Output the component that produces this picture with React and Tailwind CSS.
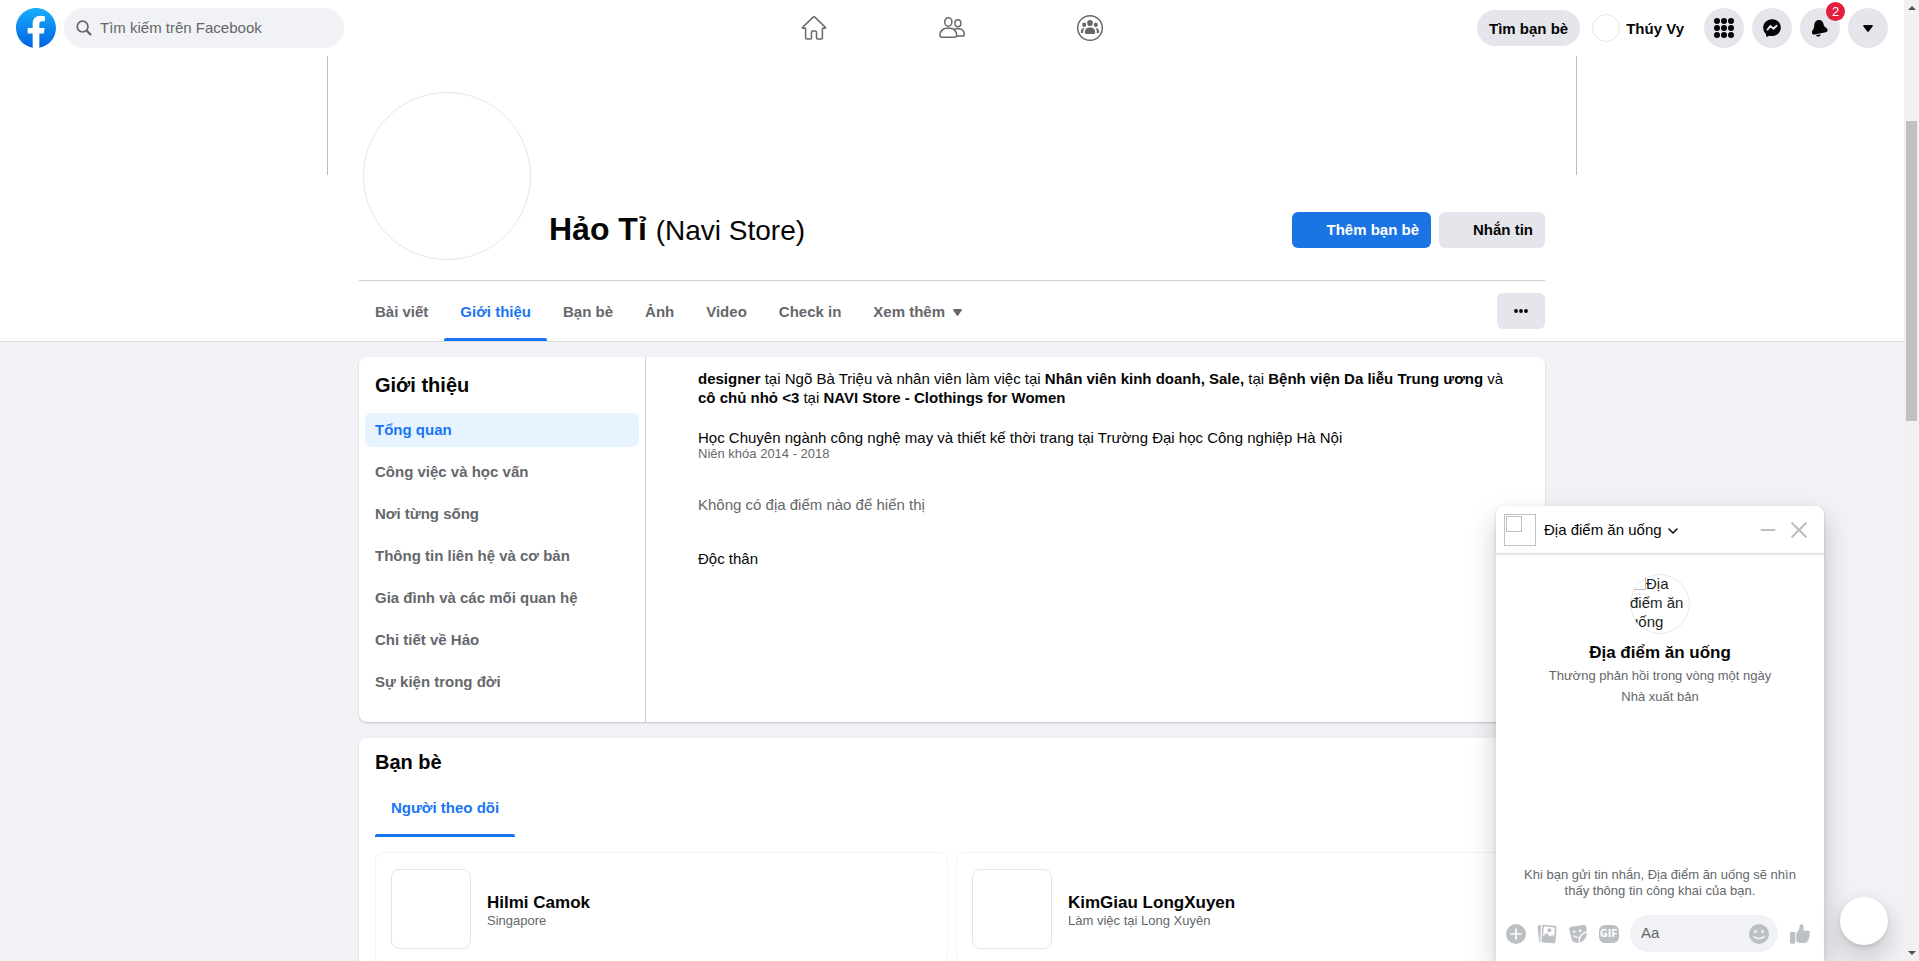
import React from "react";

const tabs = ["Bài viết", "Giới thiệu", "Bạn bè", "Ảnh", "Video", "Check in"];

const sections = [
  "Tổng quan",
  "Công việc và học vấn",
  "Nơi từng sống",
  "Thông tin liên hệ và cơ bản",
  "Gia đình và các mối quan hệ",
  "Chi tiết về Hảo",
  "Sự kiện trong đời",
];

const followers = [
  { name: "Hilmi Camok", note: "Singapore" },
  { name: "KimGiau LongXuyen", note: "Làm việc tại Long Xuyên" },
];

function Logo() {
  return (
    <svg viewBox="0 0 36 36" className="size-10" aria-hidden="true">
      <defs>
        <linearGradient id="logo-fill" x1="0" y1="0" x2="0" y2="1">
          <stop offset="0" stopColor="#19AFFF" />
          <stop offset="1" stopColor="#0062E0" />
        </linearGradient>
      </defs>
      <path fill="url(#logo-fill)" d="M15 35.8C6.5 34.3 0 26.9 0 18 0 8.1 8.1 0 18 0s18 8.1 18 18c0 8.9-6.5 16.3-15 17.8l-1-.8h-4l-1 .8z" />
      <path fill="#fff" d="M25 23l.8-5H21v-3.5c0-1.4.5-2.5 2.7-2.5H26V7.4c-1.3-.2-2.7-.4-4-.4-4.1 0-7 2.5-7 7v4h-4.5v5H15v12.7c1 .2 2 .3 3 .3s2-.1 3-.3V23h4z" />
    </svg>
  );
}

function SearchIcon() {
  return (
    <svg viewBox="0 0 16 16" className="size-4 shrink-0" fill="none" stroke="#65676b" aria-hidden="true">
      <circle cx="6.600" cy="6.600" r="5.400" strokeWidth="1.700" />
      <path d="M10.800 10.800l3.600 3.600" strokeWidth="2.200" strokeLinecap="round" />
    </svg>
  );
}

function HomeIcon() {
  return (
    <svg viewBox="0 0 28 28" className="size-7" fill="none" stroke="#65676b" strokeWidth="1.500" strokeLinejoin="round" aria-hidden="true">
      <path d="M5.600 14.200v9.600c0 .8.4 1.200 1.200 1.200h3.700c.7 0 1-.3 1-1v-5.500c0-.9.5-1.400 1.400-1.400h2.200c.9 0 1.400.5 1.400 1.400V24c0 .7.3 1 1 1h3.700c.8 0 1.200-.4 1.200-1.200v-9.600h2.600c.6 0 .8-.6.3-1L14.900 3.100c-.6-.5-1.200-.5-1.800 0L2.700 13.200c-.5.4-.3 1 .3 1z" />
    </svg>
  );
}

function FriendsIcon() {
  return (
    <svg viewBox="0 0 28 28" className="size-7" fill="none" stroke="#65676b" strokeWidth="1.500" aria-hidden="true">
      <ellipse cx="10.300" cy="8" rx="3.600" ry="4.200" />
      <path d="M1.900 21.300c0-3.800 2.700-7 6.500-7h3.800c3.800 0 6.500 3.200 6.500 7 0 1.200-.7 2-2 2H3.900c-1.300 0-2-.8-2-2z" />
      <ellipse cx="19.900" cy="9.200" rx="3" ry="3.500" />
      <path d="M16.200 15.500c.7-.5 1.500-.8 2.400-.8h2.300c3 0 5.400 2.500 5.400 5.500 0 1.200-.6 1.800-1.700 1.800h-5.800" />
    </svg>
  );
}

function GroupsIcon() {
  return (
    <svg viewBox="0 0 28 28" className="size-7" fill="#65676b" aria-hidden="true">
      <circle cx="14" cy="14" r="12.300" fill="none" stroke="#65676b" strokeWidth="1.500" />
      <ellipse cx="14" cy="9" rx="2.800" ry="3.100" />
      <path d="M8.800 18.200c0-2.500 1.900-4.600 4.400-4.600h1.600c2.500 0 4.400 2.100 4.400 4.600 0 1.200-.7 1.900-1.900 1.900h-6.600c-1.200 0-1.900-.7-1.900-1.900z" />
      <ellipse cx="8.200" cy="10.800" rx="2" ry="2.200" />
      <ellipse cx="19.800" cy="10.800" rx="2" ry="2.200" />
      <path d="M8.700 14.100c-1 .9-1.500 2.400-1.500 4v1H6c-.8 0-1.200-.4-1.200-1.200 0-2.300 1.500-3.600 3.900-3.800zM19.300 14.100c1 .9 1.500 2.400 1.500 4v1H22c.8 0 1.200-.4 1.200-1.200 0-2.300-1.500-3.600-3.900-3.800z" />
    </svg>
  );
}

function GridIcon() {
  const spots = [3, 10, 17];
  return (
    <svg viewBox="0 0 20 20" className="size-5" fill="#050505" aria-hidden="true">
      {spots.map((y) => spots.map((x) => <circle key={x + "-" + y} cx={x} cy={y} r="3" />))}
    </svg>
  );
}

function MessengerIcon() {
  return (
    <svg viewBox="0 0 20 20" className="size-5" aria-hidden="true">
      <path fill="#050505" d="M10 1.200c5 0 8.800 3.600 8.800 8.400s-3.800 8.400-8.800 8.400c-.9 0-1.700-.1-2.500-.3l-2.400 1c-.5.200-1-.1-1-.6l-.1-1.800C2.200 14.700 1.200 12.300 1.200 9.600c0-4.800 3.800-8.400 8.800-8.400z" />
      <path fill="none" stroke="#e4e6eb" strokeWidth="1.900" strokeLinejoin="round" strokeLinecap="round" d="M5.500 11.600l2.800-3.500 3.200 2.600 3.100-3" />
    </svg>
  );
}

function BellIcon() {
  return (
    <svg viewBox="0 0 20 20" className="size-5" fill="#050505" aria-hidden="true">
      <path d="M4.300 7.300C4.300 4.200 6.200 2 9 2c2.400 0 4 1.500 4.500 4 .3 1.800 1 2.700 2.800 4 2.100 1.500 1.700 3.700-.6 4.200L5 16.500c-2.300.4-3.600-1-2.900-3.100.4-1.200 1.300-1.900 1.700-3.400z" />
      <path d="M5.900 17.200l4.600-1c.1 1.200-.6 2.100-1.800 2.300-1.200.2-2.300-.3-2.800-1.300z" />
    </svg>
  );
}

function Caret({ className }) {
  return (
    <svg viewBox="0 0 12 8" className={className} preserveAspectRatio="none" fill="currentColor" aria-hidden="true">
      <path d="M1.400 0h9.200c1.100 0 1.600 1 .9 1.800L6.900 7.400c-.5.700-1.300.7-1.800 0L.5 1.800C-.2 1 .3 0 1.400 0z" />
    </svg>
  );
}

function PlusIcon() {
  return (
    <svg viewBox="0 0 20 20" className="size-5" aria-hidden="true">
      <circle cx="10" cy="10" r="10" fill="#bcc0c4" />
      <path d="M10 5v10M5 10h10" stroke="#fff" strokeWidth="1.700" strokeLinecap="round" />
    </svg>
  );
}

function PhotosIcon() {
  return (
    <svg viewBox="0 0 20 20" className="size-5" fill="#bcc0c4" aria-hidden="true">
      <path d="M.6 3c-.2-.8.200-1.500 1-1.600l2.400-.3L3.200 16.400c0 .7.200 1.300.6 1.800-.9.100-1.600-.4-1.700-1.300z" />
      <path fillRule="evenodd" d="M6.500.8l11.400.9c1.200.1 1.700.8 1.600 2L18.500 17.500c-.1 1.200-.8 1.900-2 1.800l-10.400-.8c-1.200-.1-1.700-.9-1.600-2.100L5.200 2.200C5.300 1.200 5.600.7 6.500.8zM6.800 2.700L6 12.200l2.900-2.700c.6-.5 1.100-.4 1.500.1l2.300 3.100 2-1.500c.5-.3.900-.2 1.200.2l1.200 1.900.7-9.200c0-.4-.2-.6-.6-.6L7.500 2.200c-.4 0-.6.1-.7.5z" />
      <circle cx="12.400" cy="6.200" r="2" />
    </svg>
  );
}

function StickerIcon() {
  return (
    <svg viewBox="0 0 20 20" className="size-5" aria-hidden="true">
      <path fill="#bcc0c4" d="M3.500 2.700L15.400 1c1.600-.2 2.600.5 2.800 2l.5 4.200c-3.400.7-6.800 3.300-7.800 7.100-.4 1.500-.5 3-.2 4.600-1.200.3-2.500.2-3.600-.3-2.100-.8-3.400-2.400-3.900-4.700L1.200 5.600C.9 4 1.800 2.900 3.500 2.700z" />
      <path fill="#bcc0c4" d="M18.800 8.500c.1 4.600-2.500 8.700-6.900 10.100-.2-1.400-.1-2.600.3-3.800.9-3.200 3.600-5.400 6.600-6.300z" />
      <circle cx="6.300" cy="7.600" r="1.200" fill="#fff" />
      <circle cx="12" cy="6.800" r="1.200" fill="#fff" />
      <path d="M5.800 11.800c1.100 1.400 2.600 1.800 4.300 1.300" fill="none" stroke="#fff" strokeWidth="1.300" strokeLinecap="round" />
    </svg>
  );
}

function SmileIcon() {
  return (
    <svg viewBox="0 0 20 20" className="size-5" aria-hidden="true">
      <circle cx="10" cy="10" r="10" fill="#bcc0c4" />
      <circle cx="6.400" cy="7.500" r="1.500" fill="#f0f2f5" />
      <circle cx="13.600" cy="7.500" r="1.500" fill="#f0f2f5" />
      <path d="M5 12.600c2.700 2.700 7.300 2.700 10 0" fill="none" stroke="#f0f2f5" strokeWidth="1.700" strokeLinecap="round" />
    </svg>
  );
}

function ThumbIcon() {
  return (
    <svg viewBox="0 0 20 20" className="size-5" fill="#bcc0c4" aria-hidden="true">
      <path d="M1.200 8h2.800c.7 0 1.200.5 1.200 1.200v9.300c0 .7-.5 1.200-1.200 1.200H1.200C.5 19.700 0 19.200 0 18.500V9.200C0 8.500.5 8 1.200 8z" />
      <path d="M6.300 9.900c0-.9.400-1.500 1.200-2.200 1.500-1.400 2-2.900 2-5.200 0-1.400.7-2.300 1.700-2.300 1.700 0 2.500 1.500 2.400 3.700 0 1.100-.2 2-.4 2.900h4.700c1.200 0 2 .8 2 1.800 0 .8-.4 1.300-.8 1.600.5.400.7.900.7 1.500 0 .8-.4 1.400-1.100 1.700.3.400.4.800.3 1.300-.1.700-.6 1.200-1.200 1.400.4 1.800-.7 2.800-2.500 2.800h-4c-2.800 0-5-.9-5-2.500z" />
    </svg>
  );
}

function Header() {
  const round = "relative flex size-10 items-center justify-center rounded-full bg-[#e4e6eb]";
  return (
    <header className="grid h-14 shrink-0 grid-cols-[1fr_auto_1fr] items-center bg-white px-4">
      <div className="flex items-center gap-2">
        <a href="#" aria-label="Facebook"><Logo /></a>
        <label className="flex h-10 w-70 items-center gap-2 rounded-full bg-[#f0f2f5] px-3">
          <SearchIcon />
          <input
            type="search"
            aria-label="Tìm kiếm trên Facebook"
            placeholder="Tìm kiếm trên Facebook"
            className="min-w-0 flex-1 bg-transparent text-[15px] outline-none placeholder:text-[#65676b]"
          />
        </label>
      </div>
      <nav className="flex" aria-label="Chính">
        <a href="#" aria-label="Trang chủ" className="flex w-[138px] justify-center"><HomeIcon /></a>
        <a href="#" aria-label="Bạn bè" className="flex w-[138px] justify-center"><FriendsIcon /></a>
        <a href="#" aria-label="Nhóm" className="flex w-[138px] justify-center"><GroupsIcon /></a>
      </nav>
      <div className="flex items-center justify-end">
        <button className="h-9 rounded-full bg-[#e4e6eb] px-3 pt-0.5 text-[15px] font-bold">Tìm bạn bè</button>
        <a href="#" className="mr-5 ml-3 flex items-center gap-1.5 text-[15px] font-bold">
          <span className="size-7 rounded-full border border-[#e5e5e5]" />
          <span className="pt-0.5">Thúy Vy</span>
        </a>
        <div className="flex gap-2">
          <button className={round} aria-label="Menu"><GridIcon /></button>
          <button className={round} aria-label="Messenger"><MessengerIcon /></button>
          <button className={round} aria-label="Thông báo">
            <BellIcon />
            <span className="absolute -top-1.5 -right-[5px] flex size-[19px] items-center justify-center rounded-full bg-[#e41e3f] text-[13px] text-white">2</span>
          </button>
          <button className={round} aria-label="Tài khoản"><Caret className="h-[7px] w-2.5" /></button>
        </div>
      </div>
    </header>
  );
}

function Profile() {
  return (
    <section className="border-b border-[#d8dade] bg-white">
      <div className="mx-auto h-[119px] max-w-[1250px] border-x border-[#bcbcbc]" />
      <div className="mx-auto -mt-[83px] max-w-[1218px] px-4">
        <div className="flex items-end border-b border-[#ced0d4] pb-5 pl-1">
          <div className="size-[168px] rounded-full border border-[#e5e5e5] bg-white" />
          <div className="mb-[11px] ml-[18px] flex flex-1 items-center justify-between">
            <h1 className="text-[32px] leading-9 font-bold">
              Hảo Tỉ <span className="text-[28px] font-normal">(Navi Store)</span>
            </h1>
            <div className="flex gap-2 text-[15px] font-bold">
              <button className="h-9 rounded-md bg-[#1b74e4] pr-3 pl-[34px] text-white">Thêm bạn bè</button>
              <button className="h-9 rounded-md bg-[#e4e6eb] pr-3 pl-[34px]">Nhắn tin</button>
            </div>
          </div>
        </div>
        <div className="flex h-15 items-center justify-between">
          <nav className="flex h-full text-[15px] font-bold text-[#65676b]" aria-label="Trang cá nhân">
            {tabs.map((t, i) => (
              <a
                key={t}
                href="#"
                className={
                  i === 1
                    ? "relative flex items-center px-4 pt-0.5 text-[#1876f2] after:absolute after:inset-x-0 after:bottom-0 after:h-[3px] after:rounded-t-xs after:bg-[#1876f2]"
                    : "flex items-center px-4 pt-0.5"
                }
              >
                {t}
              </a>
            ))}
            <button className="flex items-center gap-2 px-4 pt-0.5 font-bold">
              Xem thêm <Caret className="h-[7px] w-[9px]" />
            </button>
          </nav>
          <button className="flex h-9 w-12 items-center justify-center rounded-md bg-[#e4e6eb]" aria-label="Khác">
            <svg viewBox="0 0 14 4" className="h-1 w-3.5" fill="#050505" aria-hidden="true">
              <circle cx="2" cy="2" r="1.900" /><circle cx="7" cy="2" r="1.900" /><circle cx="12" cy="2" r="1.900" />
            </svg>
          </button>
        </div>
      </div>
    </section>
  );
}

function About() {
  return (
    <section className="flex rounded-lg bg-white shadow-[0_1px_2px_rgba(0,0,0,0.2)]">
      <div className="w-[287px] shrink-0 border-r border-[#ced0d4] px-1.5 pt-4 pb-[23px]">
        <h2 className="px-2.5 text-xl leading-6 font-bold">Giới thiệu</h2>
        <nav className="mt-4 flex flex-col gap-2" aria-label="Giới thiệu">
          {sections.map((s, i) => (
            <a
              key={s}
              href="#"
              className={
                "flex h-[34px] items-center rounded-md px-2.5 text-[15px] font-bold " +
                (i === 0 ? "bg-[#e7f3ff] text-[#1876f2]" : "text-[#65676b]")
              }
            >
              {s}
            </a>
          ))}
        </nav>
      </div>
      <div className="flex-1 pt-3 pr-8 pl-[52px] text-[15px] leading-[19px]">
        <p>
          <b>designer</b> tại Ngõ Bà Triệu và nhân viên làm việc tại <b>Nhân viên kinh doanh, Sale,</b> tại{" "}
          <b>Bệnh viện Da liễu Trung ương</b> và <b>cô chủ nhỏ &lt;3</b> tại <b>NAVI Store - Clothings for Women</b>
        </p>
        <p className="mt-[21px]">Học Chuyên ngành công nghệ may và thiết kế thời trang tại Trường Đại học Công nghiệp Hà Nội</p>
        <p className="text-[13px] leading-[14px] text-[#65676b]">Niên khóa 2014 - 2018</p>
        <p className="mt-[34px] text-[#65676b]">Không có địa điểm nào để hiển thị</p>
        <p className="mt-[35px]">Độc thân</p>
      </div>
    </section>
  );
}

function Friends() {
  return (
    <section className="rounded-lg bg-white p-4 pt-3 shadow-[0_1px_2px_rgba(0,0,0,0.2)]">
      <h2 className="text-xl leading-6 font-bold">Bạn bè</h2>
      <div className="mt-1 flex h-15">
        <a href="#" className="relative flex items-center px-4 text-[15px] font-bold text-[#1876f2] after:absolute after:inset-x-0 after:bottom-px after:h-[3px] after:rounded-t-xs after:bg-[#1876f2]">
          Người theo dõi
        </a>
      </div>
      <ul className="mt-3.5 grid grid-cols-2 gap-2">
        {followers.map((f) => (
          <li key={f.name} className="flex items-center gap-4 rounded-lg border border-[#f4f4f5] px-[15px] py-4">
            <span className="size-20 rounded-lg border border-[#e5e5e5]" />
            <div className="pt-1">
              <a href="#" className="block text-[17px] leading-5 font-bold">{f.name}</a>
              <p className="text-[13px] leading-4 text-[#65676b]">{f.note}</p>
            </div>
          </li>
        ))}
      </ul>
    </section>
  );
}

function Chat() {
  const tool = "flex w-[31px] justify-center";
  return (
    <aside className="absolute right-20 bottom-0 flex h-[455px] w-[328px] flex-col rounded-t-lg bg-white shadow-[0_12px_28px_rgba(0,0,0,0.2),0_2px_4px_rgba(0,0,0,0.1)]">
      <div className="flex h-12 shrink-0 items-center rounded-t-lg border-b border-[#dcdde0] px-2 shadow-[0_1px_2px_rgba(0,0,0,0.1)]">
        <span className="flex size-8 border border-[#c0c0c0] p-px">
          <span className="size-4 border border-[#c0c0c0]" />
        </span>
        <button className="ml-2 flex items-center gap-1.5 pt-0.5 text-[15px]">
          Địa điểm ăn uống
          <svg viewBox="0 0 10 6" className="h-1.5 w-2.5" fill="none" stroke="#050505" strokeWidth="1.500" strokeLinecap="round" strokeLinejoin="round" aria-hidden="true">
            <path d="M1 1l4 4 4-4" />
          </svg>
        </button>
        <div className="mr-2 ml-auto flex items-center gap-3.5 text-[#bcc0c4]">
          <button aria-label="Thu nhỏ">
            <svg viewBox="0 0 18 18" className="size-[18px]" stroke="currentColor" strokeWidth="2" strokeLinecap="round" aria-hidden="true">
              <path d="M3.500 9h13" />
            </svg>
          </button>
          <button aria-label="Đóng">
            <svg viewBox="0 0 18 18" className="size-[18px]" stroke="currentColor" strokeWidth="2.300" strokeLinecap="round" aria-hidden="true">
              <path d="M2.200 2.200l13.600 13.600M15.800 2.200L2.200 15.800" />
            </svg>
          </button>
        </div>
      </div>
      <div className="flex flex-1 flex-col items-center pt-5 text-center">
        <div className="relative size-15 overflow-hidden rounded-full text-left text-[15px] leading-[19px] text-[#1c1e21] after:absolute after:inset-0 after:rounded-full after:border after:border-black/10">
          <span className="inline-block size-4 border border-[#c0c0c0] align-top" />
          Địa điểm ăn uống
        </div>
        <h3 className="mt-[9px] text-[17px] leading-5 font-bold">Địa điểm ăn uống</h3>
        <p className="mt-[5px] text-[13px] leading-4 text-[#65676b]">Thường phản hồi trong vòng một ngày</p>
        <p className="mt-[5px] text-[13px] leading-4 text-[#65676b]">Nhà xuất bản</p>
        <p className="mt-auto px-5 text-[13px] leading-4 text-[#65676b]">
          Khi bạn gửi tin nhắn, Địa điểm ăn uống sẽ nhìn thấy thông tin công khai của bạn.
        </p>
      </div>
      <div className="mt-4 mb-[9px] flex items-center pl-1">
        <button className={tool} aria-label="Thêm"><PlusIcon /></button>
        <button className={tool} aria-label="Ảnh"><PhotosIcon /></button>
        <button className={tool} aria-label="Nhãn dán"><StickerIcon /></button>
        <button className={tool}>
          <span className="flex h-[18px] w-5 items-center justify-center rounded-md bg-[#bcc0c4] font-['Open_Sans',sans-serif] text-[11px] font-bold text-white">GIF</span>
        </button>
        <label className="ml-1.5 flex h-[37px] w-[148px] items-center rounded-full bg-[#f0f2f5] pr-[9px] pl-[11px]">
          <input
            type="text"
            aria-label="Tin nhắn"
            placeholder="Aa"
            className="min-w-0 flex-1 bg-transparent text-[15px] outline-none placeholder:text-[#65676b]"
          />
          <SmileIcon />
        </label>
        <button className="flex w-11 justify-center" aria-label="Thích"><ThumbIcon /></button>
      </div>
    </aside>
  );
}

function ScrollBar() {
  return (
    <div className="flex w-[15px] shrink-0 flex-col items-center justify-between bg-[#f1f1f1] py-1.5" aria-hidden="true">
      <svg viewBox="0 0 8 4" className="h-1 w-2" fill="#505050"><path d="M0 4l4-4 4 4z" /></svg>
      <div className="mt-[111px] mb-auto h-[300px] w-[11px] bg-[#c1c1c1]" />
      <svg viewBox="0 0 8 4" className="h-1 w-2" fill="#505050"><path d="M0 0l4 4 4-4z" /></svg>
    </div>
  );
}

export default function App() {
  return (
    <div className="flex h-screen overflow-hidden bg-[#f0f2f5] font-['Liberation_Sans',Arial,sans-serif] text-[#050505]">
      <div className="relative flex min-w-0 flex-1 flex-col overflow-hidden">
        <Header />
        <main className="min-h-0 flex-1 overflow-hidden">
          <Profile />
          <div className="mx-auto mt-[15px] flex max-w-[1218px] flex-col gap-4 px-4">
            <About />
            <Friends />
          </div>
        </main>
        <Chat />
        <button
          className="absolute right-4 bottom-4 size-12 rounded-full bg-white shadow-[0_12px_28px_rgba(0,0,0,0.2),0_2px_4px_rgba(0,0,0,0.1)]"
          aria-label="Tin nhắn mới"
        />
      </div>
      <ScrollBar />
    </div>
  );
}
